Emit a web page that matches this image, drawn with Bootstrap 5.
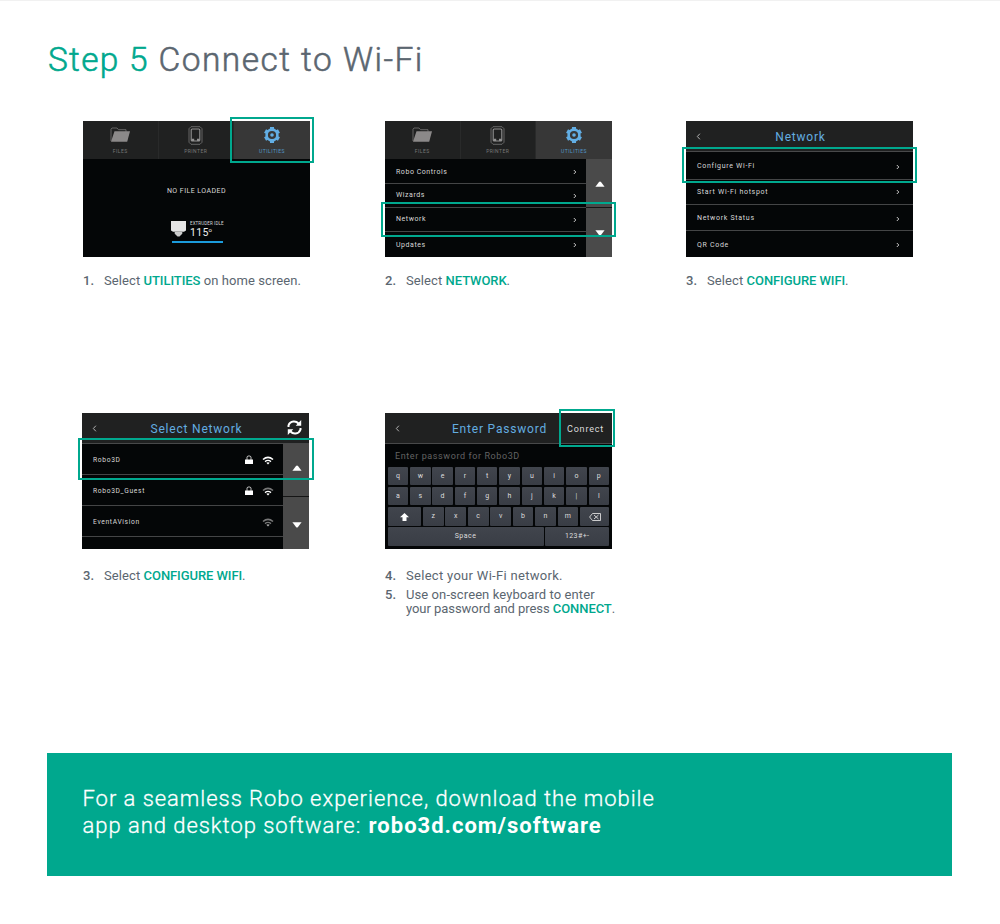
<!DOCTYPE html>
<html lang="en">
<head>
<meta charset="utf-8">
<meta name="viewport" content="width=device-width, initial-scale=1">
<title>Step 5 Connect to Wi-Fi</title>
<link href="https://cdn.jsdelivr.net/npm/bootstrap@5.3.0/dist/css/bootstrap.min.css" rel="stylesheet">
<style>
:root{--teal:#00a88e;--slate:#5b6670;--sky:#63ade0}
body{font-family:Roboto,"Liberation Sans",sans-serif;color:var(--slate);background:#fff;height:924px;overflow:hidden;border-top:1px solid #f1f1f1}
.teal{color:var(--teal);letter-spacing:1.25px}
h1{font-size:33.5px;font-weight:300;letter-spacing:1.47px;line-height:40px;margin:39px 0 0 48px;-webkit-text-stroke:.55px}
.steps{display:grid;grid-template-columns:302px 301px 240px;margin-left:83px}
.steps.first{margin-top:41px;height:292px}
.steps.second{height:340px}
.screen{width:227px;height:136px;background:#040607;color:#d8d8d8;position:relative;line-height:1;display:flex;flex-direction:column}
.shift-left{margin-left:-1px}
.screen svg{display:block;flex:none}
.mark-box{position:absolute;border:2px solid var(--teal);z-index:2}
.caption{list-style:none;margin:17px 0 0;padding:0;font-size:13px;line-height:14px;letter-spacing:.09px;width:250px}
.caption.low{margin-top:20px}
.caption li{display:flex;margin-bottom:5px}
.caption b{font-weight:500;width:21px;flex:none}
.caption strong{font-weight:500;color:var(--teal);letter-spacing:-.08px}
.caption .airy{letter-spacing:.3px}
.caption .tight{letter-spacing:-.05px}
.tabs{height:38px;flex:none;background:#202121}
.tab-cell{width:75.5px;display:flex;flex-direction:column;align-items:center;justify-content:space-between;padding:5px 0 5px;font-size:5px;letter-spacing:.45px;color:#777;border-right:1px solid #292a2a}
.tab-cell.on{width:76px;background:#373737;color:#5497c6;border:0}
.idle{font-size:7px;letter-spacing:.45px;margin-top:29px;height:33px}
.extruder{margin-left:88px;gap:4px;height:20px}
.tiny{font-size:4.5px;letter-spacing:.1px;line-height:5px;white-space:nowrap}
.temp{font-size:10.5px;line-height:13px;letter-spacing:.3px;color:#eee}
.temp sup{font-size:6px;top:-.6em}
.meter{width:51px;height:2px;margin-left:89px;background:#1b9bdc}
.bar{height:31px;flex:none;background:#202121;color:var(--sky);border-bottom:1.5px solid #48494a;font-size:12px;letter-spacing:.8px;position:relative;display:flex;align-items:center;justify-content:center;padding:2px 0 0 2px}
.back{position:absolute;left:10px;top:12px}
.line-row{display:flex;align-items:center;justify-content:space-between;padding:2px 9px 0 11px;border-bottom:1px solid #444546;font-size:7px;letter-spacing:.55px;flex:none}
.line-row:last-child{border:0}
.third .line-row{padding-right:13px;letter-spacing:.7px}
.nets .line-row{letter-spacing:.66px;font-size:6.7px;padding-top:2px}
.nets .line-row span{display:flex;align-items:center;gap:9px}
.nets .edge{border-bottom:1px solid #444546}
.scroller{width:26px;flex:none;background:#4a4a4a}
.scroller>div{display:flex;justify-content:center}
.scroller>div:first-child{border-bottom:1px solid #151515}
.scroller svg{margin-left:1px}
.pad-a{height:49px;padding-top:22px}
.pad-b{padding-top:22px}
.pad-c{height:53px;padding-top:21px}
.pad-d{padding-top:25px}
.h24{height:24px}.h25{height:25px}.h26{height:26px}.h28{height:28px}.h31{height:31px}
.full{--outer:#fff;--mid:#fff;--dot:#fff}
.half{--outer:#777;--mid:#fff;--dot:#fff}
.weak{--outer:#777;--mid:#777;--dot:#aaa}
.refresh{position:absolute;right:7px;top:7px}
.connect{position:absolute;right:8px;top:12px;font-size:9px;letter-spacing:.8px;color:#ddd}
.entry{height:23px;flex:none;padding:8px 0 0 10px;font-size:9px;letter-spacing:.6px;color:#636363}
.keys{padding:0 3px 0 2.7px;display:flex;flex-direction:column;gap:1.7px}
.keys>div{display:flex;gap:1.8px;height:18.4px}
.key{flex:1 1 0;display:flex;align-items:center;justify-content:center;background:linear-gradient(#41454d,#393d45);border-radius:1px;font-size:7px;color:#ddd;padding-top:1px}
.key.wide-a{flex:0 0 33.5px}
.key.wide-b{flex:0 0 29px}
.key.wide-c{flex:0 0 63.7px;letter-spacing:.4px}
.key.space{letter-spacing:.5px}
.box-a{left:147px;top:-4px;width:84px;height:46px}
.box-b{left:-4px;top:81px;width:235px;height:35px}
.box-c{left:-4px;top:26px;width:235px;height:36px}
.box-d{left:-4px;top:25px;width:236px;height:42px}
.box-e{left:174px;top:-4px;width:56px;height:38px}
.promo{margin-left:46.5px;width:905.5px;height:123px;background:var(--teal);color:#fff;font-size:22px;line-height:27px;font-weight:300;letter-spacing:.96px;padding:31.5px 0 0 36px;-webkit-text-stroke:.3px}
.promo b{font-weight:700;letter-spacing:1px;margin-left:1px;-webkit-text-stroke:0}
</style>
</head>
<body>
<svg width="0" height="0" class="position-absolute" aria-hidden="true">
<symbol id="folder" viewBox="0 0 20 16"><path d="M1 14V2.200L2 1h5l1.500 1.700H16V5" fill="none" stroke="#777" stroke-width=".8"/><path d="M4.500 4.300H20L17.200 14.800H1z" fill="#8b8989"/></symbol>
<symbol id="printer" viewBox="0 0 15 19"><path d="M3 .7h9l2 2v13.600l-2 2H3l-2-2V2.700z" fill="none" stroke="#777" stroke-width=".8"/><rect x="3.200" y="3" width="8.600" height="12" rx="1" fill="none" stroke="#929292" stroke-width="1.100"/><path d="M3.500 12.700h2.700V15H3.500zM9 12.700h2.700V15H9z" fill="#929292"/></symbol>
<symbol id="gear" viewBox="0 0 18 18"><g stroke="#62aee4" stroke-width="4"><path d="M9 1v16"/><path d="M9 1v16" transform="rotate(60 9 9)"/><path d="M9 1v16" transform="rotate(-60 9 9)"/></g><circle cx="9" cy="9" r="5.400" fill="#373737" stroke="#62aee4" stroke-width="2.600"/><circle cx="9" cy="9" r="1.800" fill="#62aee4"/></symbol>
<symbol id="next" viewBox="0 0 4 6"><path d="M.8 1 2.800 3 .8 5" fill="none" stroke="#ddd" stroke-width=".9"/></symbol>
<symbol id="prev" viewBox="0 0 4 6"><path d="M3.200.6 1 3l2.200 2.400" fill="none" stroke="#bbb" stroke-width=".8"/></symbol>
<symbol id="up" viewBox="0 0 10 6"><path d="M.4 5.700 4 1q1-1 2 0l3.600 4.700z" fill="#fff"/></symbol>
<symbol id="down" viewBox="0 0 10 6"><path d="M.4.3 4 5q1 1 2 0L9.600.3z" fill="#fff"/></symbol>
<symbol id="lock" viewBox="0 0 8 10"><path d="M2 5V2L2.800 1h2.400L6 2v3" fill="none" stroke="#ccc" stroke-width=".9"/><path d="M0 4.500h8V9H0z" fill="#fff"/></symbol>
<symbol id="wifi" viewBox="0 0 12 9"><path d="M1 3.500q5-4.300 10 0" fill="none" stroke="var(--outer)" stroke-width="1.600"/><path d="M3 5.600q3-2.500 6 0" fill="none" stroke="var(--mid)" stroke-width="1.400"/><path d="M4.300 6.800q1.700-1.300 3.400 0L6 8.600z" fill="var(--dot)"/></symbol>
</svg>

<h1><span class="teal">Step 5</span> Connect to Wi-Fi</h1>

<section class="steps first">
  <div>
    <div class="screen">
      <div class="tabs d-flex">
        <div class="tab-cell"><svg width="20" height="18"><use href="#folder"/></svg>FILES</div>
        <div class="tab-cell"><svg width="15" height="19"><use href="#printer"/></svg>PRINTER</div>
        <div class="tab-cell on"><svg width="18" height="18"><use href="#gear"/></svg>UTILITIES</div>
      </div>
      <div class="idle text-center">NO FILE LOADED</div>
      <div class="d-flex extruder">
        <svg width="15" height="16" viewBox="0 0 15 16"><path d="M0 0h15v9.500l-2 1.200H2L0 9.500z" fill="#e4e4e4"/><path d="M3.700 11h7.600v1.800L8.500 15.500h-2L3.700 12.800z" fill="#ccc"/></svg>
        <div><div class="tiny">EXTRUDER IDLE</div><div class="temp">115<sup>o</sup></div></div>
      </div>
      <div class="meter"></div>
      <div class="mark-box box-a"></div>
    </div>
    <ol class="caption"><li><b>1.</b><span>Select <strong>UTILITIES</strong> on home screen.</span></li></ol>
  </div>
  <div>
    <div class="screen">
      <div class="tabs d-flex">
        <div class="tab-cell"><svg width="20" height="18"><use href="#folder"/></svg>FILES</div>
        <div class="tab-cell"><svg width="15" height="19"><use href="#printer"/></svg>PRINTER</div>
        <div class="tab-cell on"><svg width="18" height="18"><use href="#gear"/></svg>UTILITIES</div>
      </div>
      <div class="d-flex flex-fill">
        <div class="flex-fill">
          <div class="line-row h25">Robo Controls<svg width="4" height="6"><use href="#next"/></svg></div>
          <div class="line-row h24 pt-0">Wizards<svg width="4" height="6"><use href="#next"/></svg></div>
          <div class="line-row h24 pt-0">Network<svg width="4" height="6"><use href="#next"/></svg></div>
          <div class="line-row h24">Updates<svg width="4" height="6"><use href="#next"/></svg></div>
        </div>
        <div class="scroller"><div class="pad-a"><svg width="10" height="6"><use href="#up"/></svg></div><div class="pad-b"><svg width="10" height="6"><use href="#down"/></svg></div></div>
      </div>
      <div class="mark-box box-b"></div>
    </div>
    <ol class="caption"><li><b>2.</b><span>Select <strong>NETWORK</strong>.</span></li></ol>
  </div>
  <div class="third">
    <div class="screen">
      <div class="bar"><svg class="back" width="5" height="7"><use href="#prev"/></svg>Network</div>
      <div>
        <div class="line-row h28">Configure Wi-Fi<svg width="4" height="6"><use href="#next"/></svg></div>
        <div class="line-row h25 pt-0">Start Wi-Fi hotspot<svg width="4" height="6"><use href="#next"/></svg></div>
        <div class="line-row h26">Network Status<svg width="4" height="6"><use href="#next"/></svg></div>
        <div class="line-row h26">QR Code<svg width="4" height="6"><use href="#next"/></svg></div>
      </div>
      <div class="mark-box box-c"></div>
    </div>
    <ol class="caption"><li><b>3.</b><span>Select <strong>CONFIGURE WIFI</strong>.</span></li></ol>
  </div>
</section>

<section class="steps second">
  <div>
    <div class="screen shift-left">
      <div class="bar"><svg class="back" width="5" height="7"><use href="#prev"/></svg>Select Network
        <svg class="refresh" width="15" height="15" viewBox="0 0 15 15"><g fill="none" stroke="#fff" stroke-width="2"><path d="M1.500 7V5.500q1-3.500 5-4 3-.3 5 2"/><path d="M13.500 8v1.500q-1 3.500-5 4-3 .3-5-2"/></g><path d="M14.200 0v5.800H8.700zM.8 15V9.200h5.500z" fill="#fff"/></svg></div>
      <div class="d-flex flex-fill">
        <div class="flex-fill nets">
          <div class="line-row h31">Robo3D<span><svg width="8" height="10"><use href="#lock"/></svg><svg class="full" width="12" height="9"><use href="#wifi"/></svg></span></div>
          <div class="line-row h31">Robo3D_Guest<span><svg width="8" height="10"><use href="#lock"/></svg><svg class="half" width="12" height="9"><use href="#wifi"/></svg></span></div>
          <div class="line-row edge h31">EventAVision<span><svg class="weak" width="12" height="9"><use href="#wifi"/></svg></span></div>
        </div>
        <div class="scroller"><div class="pad-c"><svg width="10" height="6"><use href="#up"/></svg></div><div class="pad-d"><svg width="10" height="6"><use href="#down"/></svg></div></div>
      </div>
      <div class="mark-box box-d"></div>
    </div>
    <ol class="caption low"><li><b>3.</b><span>Select <strong>CONFIGURE WIFI</strong>.</span></li></ol>
  </div>
  <div>
    <div class="screen">
      <div class="bar"><svg class="back" width="5" height="7"><use href="#prev"/></svg>Enter Password<span class="connect">Conrect</span></div>
      <div class="entry">Enter password for Robo3D</div>
      <div class="keys">
        <div><span class="key">q</span><span class="key">w</span><span class="key">e</span><span class="key">r</span><span class="key">t</span><span class="key">y</span><span class="key">u</span><span class="key">i</span><span class="key">o</span><span class="key">p</span></div>
        <div><span class="key">a</span><span class="key">s</span><span class="key">d</span><span class="key">f</span><span class="key">g</span><span class="key">h</span><span class="key">j</span><span class="key">k</span><span class="key">|</span><span class="key">l</span></div>
        <div><span class="key wide-a"><svg width="9" height="8" viewBox="0 0 9 8"><path d="M4.500 0 9 4.300H6.500V8h-4V4.300H0z" fill="#fff"/></svg></span><span class="key">z</span><span class="key">x</span><span class="key">c</span><span class="key">v</span><span class="key">b</span><span class="key">n</span><span class="key">m</span><span class="key wide-b"><svg width="12" height="8" viewBox="0 0 12 8"><path d="M.6 4 3.500.5h8v7h-8zM5 2l4.500 4M9.500 2 5 6" fill="none" stroke="#ddd" stroke-width=".9"/></svg></span></div>
        <div><span class="key space">Space</span><span class="key wide-c">123#+-</span></div>
      </div>
      <div class="mark-box box-e"></div>
    </div>
    <ol class="caption low"><li><b>4.</b><span class="airy">Select your Wi-Fi network.</span></li><li><b>5.</b><span>Use on-screen keyboard to enter<br><span class="tight">your password and press <strong>CONNECT</strong>.</span></span></li></ol>
  </div>
</section>

<section class="promo">For a seamless Robo experience, download the mobile<br>app and desktop software: <b>robo3d.com/software</b></section>

<script src="https://cdn.jsdelivr.net/npm/bootstrap@5.3.0/dist/js/bootstrap.bundle.min.js"></script>
</body>
</html>
